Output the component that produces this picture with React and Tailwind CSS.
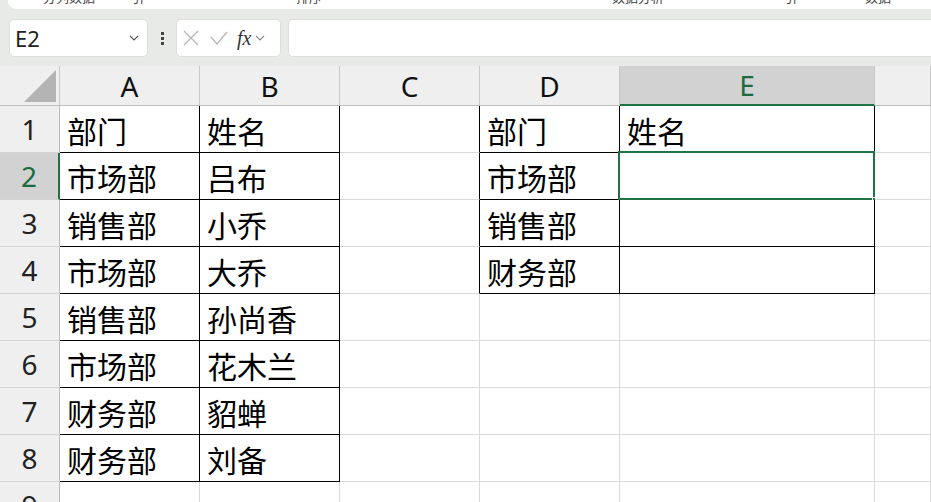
import React from 'react';

const cols = ['A', 'B', 'C', 'D', 'E', ''];
const colW = ['w-[140px]', 'w-[140px]', 'w-[140px]', 'w-[140px]', 'w-[255px]', 'flex-1'];

const data = {
  1: ['部门', '姓名', '', '部门', '姓名'],
  2: ['市场部', '吕布', '', '市场部', ''],
  3: ['销售部', '小乔', '', '销售部', ''],
  4: ['市场部', '大乔', '', '财务部', ''],
  5: ['销售部', '孙尚香', '', '', ''],
  6: ['市场部', '花木兰', '', '', ''],
  7: ['财务部', '貂蝉', '', '', ''],
  8: ['财务部', '刘备', '', '', ''],
  9: ['', '', '', '', ''],
};

// black bordered ranges: A1:B8 and D1:E4
const inRange = (r, c) => (c <= 1 && r >= 1 && r <= 8) || (c >= 3 && c <= 4 && r >= 1 && r <= 4);

const font = { fontFamily: '"Noto Sans CJK SC", "Noto Sans", sans-serif' };
const narrow = { fontFamily: '"Liberation Sans Narrow", "Noto Sans", sans-serif' };

const Cell = ({ r, c, text }) => {
  const blackRight = inRange(r, c) || inRange(r, c + 1);
  const blackBottom = inRange(r, c) || inRange(r + 1, c);
  const selected = r === 2 && c === 4;
  return (
    <div
      className={`relative h-full shrink-0 ${colW[c]} border-r border-b ${blackRight ? 'border-r-black' : 'border-r-[#dadada]'} ${blackBottom ? 'border-b-black' : 'border-b-[#dadada]'} flex items-center pl-[7px] pt-[1px] text-[30px] leading-none text-black bg-white`}
    >
      {text}
      {selected && (
        <>
          <div className="absolute -left-[2px] -top-[2px] -right-[1px] -bottom-[1px] border-2 border-[#217346]" />
          <div className="absolute -right-[4px] -bottom-[4px] w-[6px] h-[6px] bg-[#217346] border border-white" />
        </>
      )}
    </div>
  );
};

const Row = ({ r }) => {
  const sel = r === 2;
  return (
    <div className="flex h-[47px]">
      <div
        className={`w-[60px] shrink-0 flex items-center justify-center text-[28px] border-b border-b-[#d4d4d4] ${sel ? 'bg-[#d2d2d2] text-[#1e6b41] border-r-2 border-r-[#217346]' : 'bg-[#efefef] text-[#222] border-r border-r-[#bdbdbd]'}`}
        style={narrow}
      >
        {r}
      </div>
      {cols.map((_, c) => (
        <Cell key={c} r={r} c={c} text={data[r][c] || ''} />
      ))}
    </div>
  );
};

export default function App() {
  return (
    <div className="w-[931px] h-[502px] overflow-hidden bg-[#e7eae7] select-none" style={font}>
      {/* ribbon remnant, only the bottom edge of its labels shows */}
      <div className="h-[9px] ml-[8px] bg-white rounded-bl-[8px] overflow-hidden">
        <div className="flex items-end text-[13px] leading-none text-[#444] h-[12px] -mt-[9px] whitespace-nowrap">
          <span className="ml-[35px]">分列数据</span>
          <span className="ml-[36px]">引</span>
          <span className="ml-[152px]">排序</span>
          <span className="ml-[290px]">数据分析</span>
          <span className="ml-[120px]">引</span>
          <span className="ml-[68px]">数据</span>
        </div>
      </div>

      {/* formula bar */}
      <div className="flex items-center h-[57px] pt-[10px] pb-[9px]">
        <div className="ml-[9px] w-[139px] h-[38px] bg-white rounded-[5px] border border-[#dcdfdc] flex items-center pl-[5px] pr-[8px]">
          <span className="text-[22px] text-[#222] flex-1" style={narrow}>E2</span>
          <svg width="10" height="6" viewBox="0 0 10 6" fill="none" stroke="#555" strokeWidth="1.1">
            <path d="M1 1l4 4 4-4" />
          </svg>
        </div>
        <div className="w-[28px] flex flex-col items-center gap-[2px]">
          <span className="w-[3px] h-[3px] bg-[#444]" />
          <span className="w-[3px] h-[3px] bg-[#444]" />
          <span className="w-[3px] h-[3px] bg-[#444]" />
        </div>
        <div className="w-[105px] h-[38px] bg-white rounded-[5px] border border-[#dcdfdc] flex items-center pl-[6px]">
          <svg width="16" height="16" viewBox="0 0 16 16" fill="none" stroke="#b5b5b5" strokeWidth="1.2">
            <path d="M1 1l14 14M15 1L1 15" />
          </svg>
          <svg className="ml-[11px]" width="18" height="14" viewBox="0 0 18 14" fill="none" stroke="#b5b5b5" strokeWidth="1.2">
            <path d="M1 6l6 7L17 1" />
          </svg>
          <span className="ml-[9px] text-[20px] italic text-[#333]" style={{ fontFamily: '"Liberation Serif", serif' }}>fx</span>
          <svg className="ml-[4px]" width="10" height="6" viewBox="0 0 10 6" fill="none" stroke="#888" strokeWidth="1.1">
            <path d="M1 1l4 4 4-4" />
          </svg>
        </div>
        <div className="ml-[7px] flex-1 h-[38px] bg-white rounded-l-[5px] border border-r-0 border-[#dcdfdc]" />
      </div>

      {/* column header */}
      <div className="flex h-[40px] bg-[#efefef] border-b border-b-[#bdbdbd]">
        <div className="w-[60px] shrink-0 relative border-r border-r-[#c8c8c8]">
          <svg className="absolute right-[3px] bottom-[3px]" width="32" height="32" viewBox="0 0 32 32">
            <path d="M32 0V32H0Z" fill="#b4b4b4" />
          </svg>
        </div>
        {cols.map((l, c) => (
          <div
            key={c}
            className={`shrink-0 ${colW[c]} flex items-center justify-center text-[28px] border-r border-r-[#c8c8c8] ${l === 'E' ? 'bg-[#d2d2d2] text-[#1e6b41] border-b-2 border-b-[#217346] -mb-[1px]' : 'text-[#111]'}`}
            style={narrow}
          >
            {l}
          </div>
        ))}
      </div>

      {/* rows */}
      {[1, 2, 3, 4, 5, 6, 7, 8, 9].map((r) => (
        <Row key={r} r={r} />
      ))}
    </div>
  );
}
